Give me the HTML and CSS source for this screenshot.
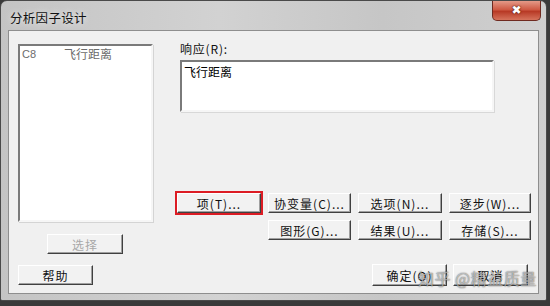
FILE: index.html
```html
<!DOCTYPE html>
<html>
<head lang="zh">
    <meta charset="UTF-8">
    <title>分析因子设计</title>
    <link rel="stylesheet" href="styles.css">
</head>
<body>

<div class="window">
    <div class="titlebar">
        <span class="title">分析因子设计</span>
        <span class="close">&#10006;</span>
    </div>
    <div class="client">
        <div class="left">
            <div class="listbox">
                <div class="item"><span class="col">C8</span><span>飞行距离</span></div>
            </div>
            <button class="btn select" disabled>选择</button>
            <button class="btn help">帮助</button>
        </div>
        <div class="right">
            <div class="label">响应(R):</div>
            <div class="textbox">飞行距离</div>
            <div class="grid">
                <button class="btn hl">项(T)...</button>
                <button class="btn">协变量(C)...</button>
                <button class="btn">选项(N)...</button>
                <button class="btn">逐步(W)...</button>
                <span></span>
                <button class="btn">图形(G)...</button>
                <button class="btn">结果(U)...</button>
                <button class="btn">存储(S)...</button>
            </div>
            <div class="actions">
                <button class="btn">确定(O)</button>
                <button class="btn">取消</button>
            </div>
        </div>
    </div>
    <div class="watermark">知乎 @精益质量</div>
</div>

</body>
</html>
```

FILE: styles.css
```css
* {
    padding: 0;
    margin: 0;
    box-sizing: border-box;
    font-family: "Noto Sans CJK SC", "Liberation Sans", sans-serif;
    font-size: 12px;
}
body{
    background: #3a3a3a;
    width: 550px;
    height: 306px;
    overflow: hidden;
}
.window{
    position: relative;
    width: 547px;
    height: 301px;
    border: 1px solid #4a4a4a;
    border-radius: 7px 7px 2px 2px;
    background: linear-gradient(to right, #c4c4c4, #d2d2d2 40%, #c6c6c6 70%, #cfcfcf);
}
.titlebar{
    display: flex;
    align-items: flex-start;
    height: 29px;
    padding-left: 9px;
}
.title{
    margin-top: 7px;
    color: #111;
    font-size: 12.5px;
    letter-spacing: 0.3px;
    text-shadow: 0 0 6px rgba(255,255,255,.9);
}
.close{
    margin-left: auto;
    margin-right: 5px;
    width: 49px;
    height: 20px;
    border: 1px solid #6f2a20;
    border-top: 0;
    border-radius: 0 0 5px 5px;
    background: linear-gradient(#e49a88, #cf5a44 45%, #b83a26 55%, #d6735c);
    color: #fff;
    font-family: "DejaVu Sans", sans-serif;
    font-size: 12px;
    font-weight: bold;
    text-align: center;
    line-height: 19px;
    text-shadow: 0 0 2px #5a1a10, 0 0 1px #5a1a10;
}
.client{
    display: flex;
    margin: 0 7px 0 7px;
    height: 264px;
    background: #f0f0f0;
    border: 1px solid #8e8e8e;
}
.left{
    display: flex;
    flex-direction: column;
    align-items: flex-start;
    width: 169px;
    padding: 13px 0 0 9px;
}
.listbox{
    width: 135px;
    height: 178px;
    background: #fff;
    border: 2px solid;
    border-color: #7a7a7a #f6f6f6 #f6f6f6 #7a7a7a;
    box-shadow: 1px 1px 0 #d4d4d4;
}
.item{
    display: flex;
    color: #707070;
    line-height: 14px;
    padding: 1px 0 0 2px;
}
.item .col{
    width: 42px;
    font-family: "Liberation Sans", sans-serif;
    font-size: 11px;
}
.item span{
    color: #6c6c6c;
}
.btn{
    height: 20px;
    background: #f2f2f2;
    border: 1px solid;
    border-color: #fff #404040 #404040 #fff;
    box-shadow: inset -1px -1px 0 #a0a0a0;
    color: #111;
    font-size: 12px;
    letter-spacing: 1px;
    line-height: 17px;
    text-align: center;
    white-space: nowrap;
}
.select{
    width: 76px;
    margin: 12px 0 0 29px;
    color: #a8a8a8;
}
.help{
    width: 75px;
    margin-top: 11px;
}
.right{
    display: flex;
    flex-direction: column;
    flex: 1;
}
.label{
    margin: 9px 0 0 3px;
    height: 17px;
    color: #111;
    letter-spacing: 0.8px;
}
.textbox{
    width: 314px;
    height: 52px;
    margin: 3px 0 0 3px;
    padding: 3px 0 0 2px;
    background: #fff;
    border: 2px solid;
    border-color: #7a7a7a #f6f6f6 #f6f6f6 #7a7a7a;
    box-shadow: 1px 1px 0 #d8d8d8;
    color: #000;
    line-height: 14px;
}
.grid{
    display: grid;
    grid-template-columns: 84px 83px 84px 82px;
    column-gap: 7px;
    row-gap: 7px;
    margin-top: 81px;
    width: 361px;
}
.grid .btn{
    width: 100%;
}
.grid .hl{
    outline: 2px solid #dc1c24;
    outline-offset: 0;
}
.actions{
    display: flex;
    justify-content: flex-end;
    gap: 6px;
    width: 351px;
    margin-top: 24px;
}
.actions .btn{
    width: 75px;
    height: 22px;
    line-height: 19px;
}
.watermark{
    position: absolute;
    left: 417px;
    top: 265px;
    color: rgba(255,255,255,.55);
    font-size: 16px;
    letter-spacing: 0.5px;
    text-shadow: 0 0 1px rgba(0,0,0,.6), 0 0 2px rgba(0,0,0,.3);
}
```
